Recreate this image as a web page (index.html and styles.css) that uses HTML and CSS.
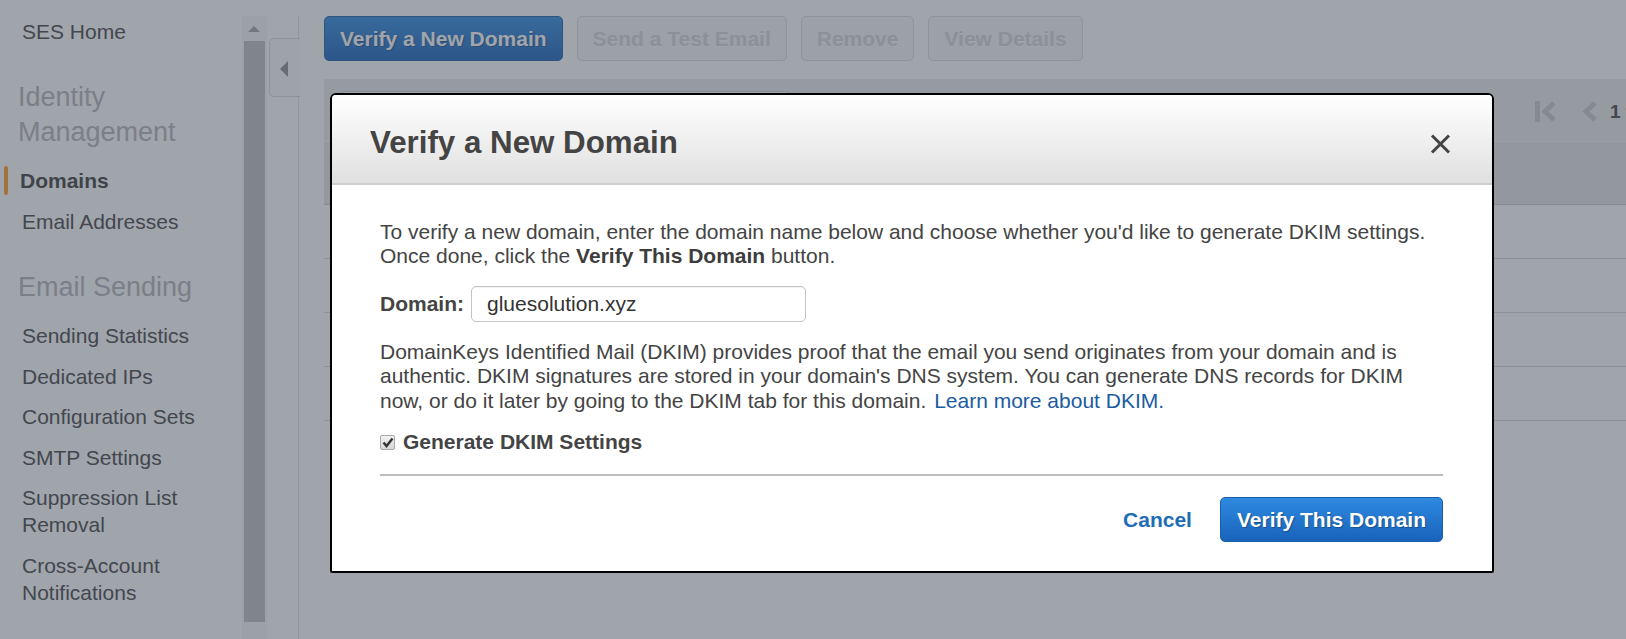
FILE: index.html
```html
<!DOCTYPE html>
<html lang="en">
<head>
<meta charset="utf-8">
<title>Amazon SES - Domains</title>
<link rel="stylesheet" href="styles.css">
</head>
<body>
<div class="page">
  <nav class="sidebar">
    <div class="nav-list">
      <a class="nav-item">SES Home</a>
      <h2 class="nav-heading">Identity Management</h2>
      <a class="nav-item active">Domains</a>
      <a class="nav-item">Email Addresses</a>
      <h2 class="nav-heading">Email Sending</h2>
      <a class="nav-item">Sending Statistics</a>
      <a class="nav-item">Dedicated IPs</a>
      <a class="nav-item">Configuration Sets</a>
      <a class="nav-item">SMTP Settings</a>
      <a class="nav-item">Suppression List Removal</a>
      <a class="nav-item">Cross-Account Notifications</a>
    </div>
    <div class="scrollbar">
      <span class="scroll-arrow"></span>
      <span class="scroll-thumb"></span>
    </div>
  </nav>
  <div class="collapse-col">
    <span class="collapse-tab"><span class="collapse-arrow"></span></span>
  </div>
  <main class="main">
    <div class="actions">
      <button class="btn btn-primary">Verify a New Domain</button>
      <button class="btn btn-disabled">Send a Test Email</button>
      <button class="btn btn-disabled">Remove</button>
      <button class="btn btn-disabled">View Details</button>
    </div>
    <div class="table">
      <div class="table-toolbar">
        <div class="filter-area"><span class="filter-box"></span></div>
        <div class="pager">
          <svg class="pager-icon" width="22" height="21" viewBox="0 0 22 21"><rect x="0" y="0" width="5" height="21" rx="1" fill="currentColor"/><polyline points="19,2 10,10.5 19,19" fill="none" stroke="currentColor" stroke-width="5"/></svg>
          <svg class="pager-icon prev" width="15" height="21" viewBox="0 0 15 21"><polyline points="13,2 4,10.5 13,19" fill="none" stroke="currentColor" stroke-width="5"/></svg>
          <span class="pager-text">1 to 4 of 4 Identities</span>
        </div>
      </div>
      <div class="table-head"></div>
      <div class="table-row"></div>
      <div class="table-row"></div>
      <div class="table-row"></div>
      <div class="table-row"></div>
    </div>
  </main>
</div>

<div class="backdrop"></div>

<div class="modal" role="dialog">
  <div class="modal-header">
    <h1 class="modal-title">Verify a New Domain</h1>
    <span class="modal-close" aria-label="Close">
      <svg width="21" height="20" viewBox="0 0 21 20"><path d="M2 1.5 L19 18.5 M19 1.5 L2 18.5" stroke="#444" stroke-width="3" fill="none"/></svg>
    </span>
  </div>
  <div class="modal-body">
    <p class="para">To verify a new domain, enter the domain name below and choose whether you'd like to generate DKIM settings. Once done, click the <b>Verify This Domain</b> button.</p>
    <div class="domain-row">
      <label class="domain-label">Domain:</label>
      <input class="domain-input" type="text" value="gluesolution.xyz">
    </div>
    <p class="para dkim-para">DomainKeys Identified Mail (DKIM) provides proof that the email you send originates from your domain and is authentic. DKIM signatures are stored in your domain's DNS system. You can generate DNS records for DKIM now, or do it later by going to the DKIM tab for this domain. <a class="link">Learn more about DKIM.</a></p>
    <div class="check-row">
      <span class="checkbox"><svg width="12" height="11" viewBox="0 0 12 11"><path d="M1.5 5.5 L4.5 9 L10.5 1.5" stroke="#333" stroke-width="2.4" fill="none"/></svg></span>
      <span class="check-label">Generate DKIM Settings</span>
    </div>
    <div class="divider"></div>
    <div class="modal-footer">
      <a class="cancel">Cancel</a>
      <button class="btn btn-blue">Verify This Domain</button>
    </div>
  </div>
</div>
</body>
</html>
```

FILE: styles.css
```css
* { box-sizing: border-box; }

html, body {
  margin: 0;
  padding: 0;
  height: 100%;
  overflow: hidden;
  background: #ffffff;
  font-family: "Liberation Sans", Arial, Helvetica, sans-serif;
  color: #444;
}

.page {
  display: flex;
  height: 639px;
  overflow: hidden;
}

/* ---------- sidebar ---------- */
.sidebar {
  display: flex;
  flex: 0 0 267px;
  background: #fff;
}

.nav-list {
  flex: 0 0 242px;
  display: flex;
  flex-direction: column;
  padding-top: 11.5px;
}

.nav-item {
  position: relative;
  display: block;
  font-size: 21px;
  line-height: 27px;
  padding: 6.8px 8px 6.8px 22px;
  color: #444;
}

.nav-item.active {
  font-weight: bold;
  color: #3c3c3c;
  padding-left: 20px;
}

.nav-item.active::before {
  content: "";
  position: absolute;
  left: 4px;
  top: 5.5px;
  bottom: 6px;
  width: 4px;
  border-radius: 2px;
  background: #ff9d1e;
}

.nav-heading {
  margin: 28px 0 10.5px;
  padding-left: 18px;
  font-size: 27px;
  line-height: 35px;
  font-weight: normal;
  color: #b3b5b8;
}

.scrollbar {
  flex: 0 0 25px;
  margin-top: 16px;
  background: #f7f7f7;
  display: flex;
  flex-direction: column;
  align-items: center;
}

.scroll-arrow {
  flex: 0 0 25px;
  width: 25px;
  position: relative;
}

.scroll-arrow::after {
  content: "";
  position: absolute;
  left: 6px;
  top: 10px;
  border-left: 6px solid transparent;
  border-right: 6px solid transparent;
  border-bottom: 6px solid #a3a3a3;
}

.scroll-thumb {
  width: 21px;
  height: 581px;
  background: #bfc1c3;
}

/* ---------- collapse column ---------- */
.collapse-col {
  flex: 0 0 32px;
  border-right: 1px solid #e3e3e3;
  margin-top: 16px;
  position: relative;
}

.collapse-tab {
  display: block;
  margin-top: 22px;
  margin-left: 2px;
  margin-right: -2px;
  height: 59px;
  background: #fbfbfb;
  border: 1px solid #d8d8d8;
  border-right: none;
  border-radius: 5px 0 0 5px;
  position: relative;
}

.collapse-arrow {
  position: absolute;
  left: 10px;
  top: 22px;
  border-top: 8px solid transparent;
  border-bottom: 8px solid transparent;
  border-right: 8px solid #8c8c8c;
}

/* ---------- main ---------- */
.main {
  flex: 1 1 auto;
  padding: 16px 0 0 25px;
  overflow: hidden;
  min-width: 0;
}

.actions {
  display: flex;
  gap: 14px;
}

.btn {
  height: 45px;
  padding: 0 15px;
  font-family: inherit;
  font-size: 21px;
  font-weight: bold;
  border-radius: 5px;
  white-space: nowrap;
}

.btn-primary,
.btn-blue {
  color: #fff;
  background: linear-gradient(#2f8ae0, #1863bb);
  border: 1px solid #1a5ea9;
  text-shadow: 1px 1px 1px #17508f;
}

.btn-disabled {
  color: #d6d6d6;
  background: #f6f6f6;
  border: 1px solid #dadada;
  text-shadow: 0 1px 0 #fff;
}

.table {
  margin-top: 18px;
  width: 1480px;
}

.table-toolbar {
  display: flex;
  align-items: center;
  height: 63px;
  background: #ebebeb;
  border-bottom: 1px solid #f7f7f7;
}

.filter-area {
  flex: 0 0 1211px;
  padding-left: 16px;
  align-self: flex-start;
  padding-top: 12px;
}

.filter-box {
  display: block;
  width: 450px;
  height: 36px;
  background: #fff;
  border: 1px solid #d0d0d0;
  border-radius: 4px;
}

.pager {
  display: flex;
  align-items: center;
  color: #c8c8c8;
  margin-top: 3px;
}

.pager-icon.prev {
  margin-left: 25px;
}

.pager-text {
  margin-left: 13px;
  color: #444;
  font-size: 19px;
  font-weight: bold;
  white-space: nowrap;
}

.table-head {
  height: 63px;
  background: #e5e5e5;
  border-bottom: 1px solid #cbcbcb;
}

.table-row {
  height: 54px;
  background: #fff;
  border-bottom: 1px solid #d6d6d6;
}

/* ---------- overlay + modal ---------- */
.backdrop {
  position: fixed;
  inset: 0;
  background: rgba(65, 73, 88, 0.5);
}

.modal {
  position: fixed;
  left: 330px;
  top: 93px;
  width: 1164px;
  background: #fff;
  border: 2px solid #000;
  border-radius: 6px 6px 2px 2px;
  overflow: hidden;
}

.modal-header {
  display: flex;
  align-items: center;
  justify-content: space-between;
  height: 90px;
  padding: 7px 41px 0 38px;
  background: linear-gradient(#ffffff, #e0e0e0);
  border-bottom: 2px solid #cfcfcf;
}

.modal-title {
  margin: 0;
  font-size: 31.3px;
  line-height: 1;
  font-weight: bold;
  color: #444;
}

.modal-close {
  display: flex;
  margin-top: 3px;
}

.modal-body {
  padding: 35px 49px 29px 48px;
  font-size: 21px;
  line-height: 24.4px;
  color: #444;
}

.para {
  margin: 0;
}

.para b {
  color: #3d3d3d;
}

.domain-row {
  display: flex;
  align-items: center;
  gap: 7px;
  margin-top: 17px;
}

.domain-label {
  font-weight: bold;
}

.domain-input {
  width: 335px;
  height: 36px;
  padding: 0 15px;
  border: 1px solid #c4c4c4;
  border-radius: 5px;
  font-family: inherit;
  font-size: 21px;
  color: #333;
  box-shadow: inset 0 1px 1px rgba(0, 0, 0, 0.06);
}

.dkim-para {
  margin-top: 18px;
}

.link {
  color: #1b5b9f;
  margin-left: 2px;
}

.check-row {
  display: flex;
  align-items: center;
  gap: 8px;
  margin-top: 17px;
  padding-left: 0;
}

.checkbox {
  display: flex;
  align-items: center;
  justify-content: center;
  width: 15px;
  height: 15px;
  border: 1px solid #a9a9a9;
  border-radius: 2px;
  background: linear-gradient(#f2f2f2, #d6d6d6);
}

.check-label {
  font-weight: bold;
}

.divider {
  margin-top: 20px;
  height: 2px;
  background: #bdbdbd;
}

.modal-footer {
  display: flex;
  justify-content: flex-end;
  align-items: center;
  gap: 28px;
  margin-top: 21px;
}

.cancel {
  color: #1e6db5;
  font-weight: bold;
}

.btn-blue {
  padding: 0 16px;
}
```
